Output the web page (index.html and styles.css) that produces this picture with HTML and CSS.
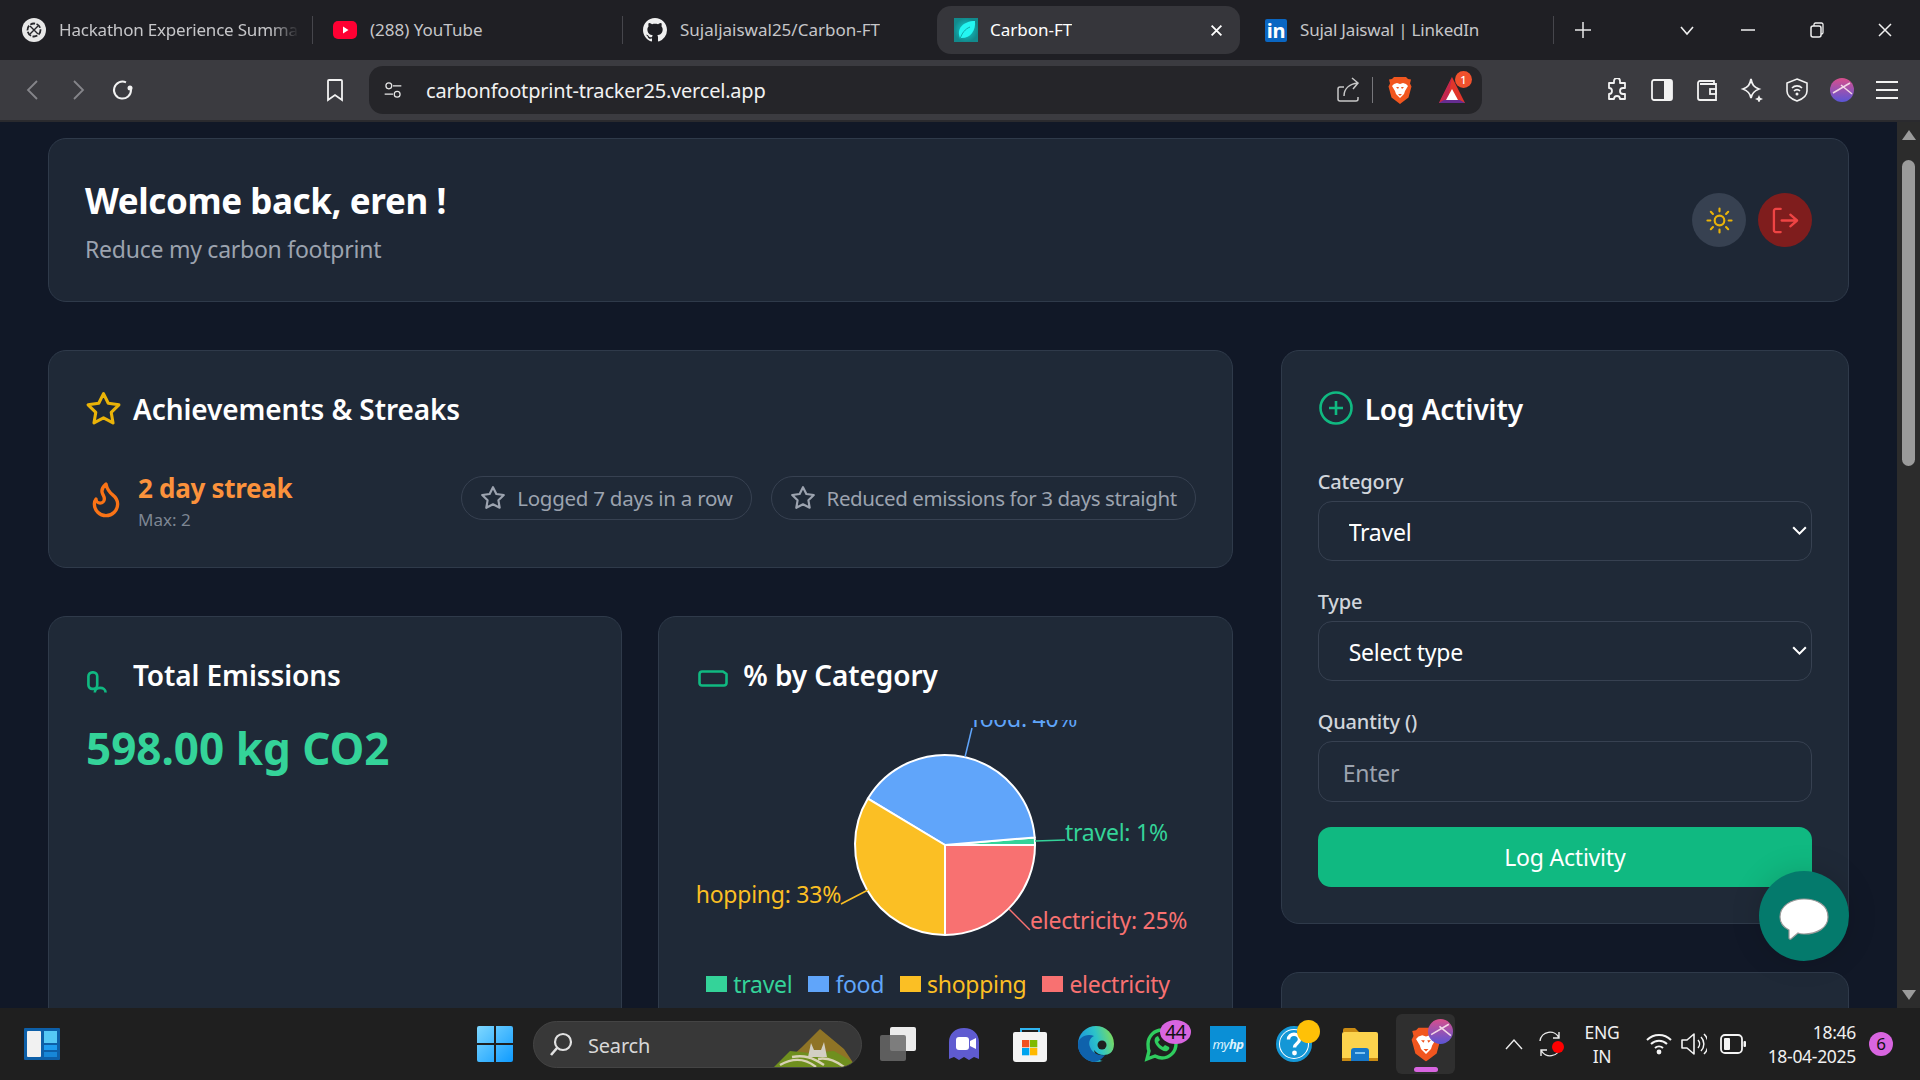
FILE: index.html
```html
<!DOCTYPE html>
<html lang="en">
<head>
  <meta charset="UTF-8">
  <title>Carbon-FT</title>
  <link rel="stylesheet" href="styles.css">
</head>
<body>
  <svg class="defs" width="0" height="0">
    <defs>
      <symbol id="lion" viewBox="0 0 24 28">
        <path fill="#f1561f" d="M6 1h12l2 2 3 .5-1 4 1.500 3-3 11L12 28l-8.500-6.500-3-11L2 7.500l-1-4L4 3z"/>
        <path fill="#fff" d="M6 8l3-1 3 1 3-1 3 1 2 2-3 5-1 3-4 4-4-4-1-3-3-5z"/>
        <path fill="#f1561f" d="M8 11h3l-1 2zM13 11h3l-2 2zM10 18h4l-2 2z"/>
      </symbol>
      <symbol id="profile" viewBox="0 0 24 24">
        <defs>
          <linearGradient id="pg" x1="0" y1="0" x2="0" y2="1"><stop offset="0" stop-color="#d94f8c"/><stop offset="1" stop-color="#5a55d6"/></linearGradient>
        </defs>
        <circle cx="12" cy="12" r="12" fill="url(#pg)"/>
        <path d="M3 15L20 5M11 7l11 9" stroke="#f3d6e6" stroke-width="1.500" fill="none"/>
      </symbol>
      <symbol id="star" viewBox="0 0 24 24">
        <polygon fill="none" stroke="currentColor" stroke-width="2" stroke-linejoin="round" points="12 2 15.090 8.260 22 9.270 17 14.140 18.180 21.020 12 17.770 5.820 21.020 7 14.140 2 9.270 8.910 8.260 12 2"/>
      </symbol>
      <symbol id="chev" viewBox="0 0 12 12">
        <path d="M2 4l4 4 4-4" fill="none" stroke="#fff" stroke-width="1.300"/>
      </symbol>
    </defs>
  </svg>

  <div class="tabstrip">
    <div class="tab tab-one">
      <svg class="fav" viewBox="0 0 24 24"><circle cx="12" cy="12" r="12" fill="#e8e8e8"/><circle cx="12" cy="12" r="6.500" fill="none" stroke="#26262b" stroke-width="1.800" stroke-dasharray="5 1.500"/><path d="M8 8l8 8M16 8l-8 8" stroke="#26262b" stroke-width="1.400"/></svg>
      <span class="tab-title fade">Hackathon Experience Summary</span>
    </div>
    <div class="tab tab-two">
      <svg class="fav" viewBox="0 0 24 24"><rect y="3" width="24" height="18" rx="5" fill="#ff0033"/><path d="M10 8.500l5.500 3.500-5.500 3.500z" fill="#fff"/></svg>
      <span class="tab-title">(288) YouTube</span>
    </div>
    <div class="tab tab-three">
      <svg class="fav" viewBox="0 0 16 16"><path fill="#f0f0f0" d="M8 0C3.580 0 0 3.580 0 8c0 3.540 2.290 6.530 5.470 7.590.4.070.55-.17.55-.38 0-.19-.01-.82-.01-1.490-2.010.37-2.530-.49-2.690-.94-.09-.23-.48-.94-.82-1.130-.28-.15-.68-.52-.01-.53.63-.01 1.080.58 1.230.82.72 1.210 1.870.87 2.330.66.07-.52.28-.87.51-1.070-1.780-.2-3.640-.89-3.640-3.950 0-.87.31-1.590.82-2.150-.08-.2-.36-1.020.08-2.120 0 0 .67-.21 2.200.82.64-.18 1.320-.27 2-.27.68 0 1.360.09 2 .27 1.530-1.040 2.200-.82 2.200-.82.44 1.100.16 1.920.08 2.120.51.56.82 1.270.82 2.150 0 3.070-1.870 3.750-3.650 3.950.29.25.54.73.54 1.480 0 1.070-.01 1.930-.01 2.200 0 .21.15.46.55.38A8.013 8.013 0 0016 8c0-4.420-3.580-8-8-8z"/></svg>
      <span class="tab-title">Sujaljaiswal25/Carbon-FT</span>
    </div>
    <div class="tab tab-active">
      <svg class="fav" viewBox="0 0 24 24">
        <defs><radialGradient id="cg"><stop offset="0" stop-color="#12d0d0"/><stop offset="1" stop-color="#128a8c"/></radialGradient></defs>
        <rect width="24" height="24" fill="url(#cg)"/><path d="M6 20C2 11 9 3 21 3c1 10-5 18-15 17z" fill="#24f6f2"/><path d="M6 21C8 15 11 11 16 9" fill="none" stroke="#12a8a8" stroke-width="1"/>
      </svg>
      <span class="tab-title">Carbon-FT</span>
      <svg class="tab-close" viewBox="0 0 12 12"><path d="M1.500 1.500l9 9M10.500 1.500l-9 9" stroke="#fff" stroke-width="1.700"/></svg>
    </div>
    <div class="tab tab-five">
      <span class="fav-in">in</span>
      <span class="tab-title">Sujal Jaiswal | LinkedIn</span>
    </div>
    <svg class="strip-ic plus" viewBox="0 0 18 18"><path d="M9 1v16M1 9h16" stroke="#e8e8e8" stroke-width="1.500"/></svg>
    <svg class="strip-ic tabs-down" viewBox="0 0 16 16"><path d="M2 5l6 7 6-7" stroke="#f0f0f0" stroke-width="1.600" fill="none"/></svg>
    <svg class="strip-ic win-min" viewBox="0 0 16 16"><path d="M1 8h14" stroke="#f0f0f0" stroke-width="1.500"/></svg>
    <svg class="strip-ic win-max" viewBox="0 0 16 16"><path d="M5 4V2.500A1.500 1.500 0 016.500 1h6A1.500 1.500 0 0114 2.500v8a1.500 1.500 0 01-1.500 1.500H12" fill="none" stroke="#f0f0f0" stroke-width="1.300"/><rect x="2" y="4" width="10" height="11" rx="2" fill="none" stroke="#f0f0f0" stroke-width="1.500"/></svg>
    <svg class="strip-ic win-close" viewBox="0 0 16 16"><path d="M2 2l12 12M14 2L2 14" stroke="#f0f0f0" stroke-width="1.500"/></svg>
  </div>

  <div class="toolbar">
    <div class="nav">
      <svg class="tool" viewBox="0 0 24 24"><path d="M16 3L7 12l9 9" fill="none" stroke="#85858a" stroke-width="1.800"/></svg>
      <svg class="tool" viewBox="0 0 24 24"><path d="M8 3l9 9-9 9" fill="none" stroke="#85858a" stroke-width="1.800"/></svg>
      <svg class="tool" viewBox="0 0 24 24"><path d="M20 12a8.500 8.500 0 11-5-7.700" fill="none" stroke="#f2f2f2" stroke-width="2"/><circle cx="19" cy="10" r="2.500" fill="#f2f2f2"/></svg>
    </div>
    <svg class="tool bookmark" viewBox="0 0 24 24"><path d="M6 2h12a1 1 0 011 1v19l-7-5-7 5V3a1 1 0 011-1z" fill="none" stroke="#f2f2f2" stroke-width="1.800"/></svg>
    <div class="address">
      <svg class="site" viewBox="0 0 24 24"><circle cx="7" cy="7" r="3.500" fill="none" stroke="#e8e8e8" stroke-width="1.500"/><path d="M12 7h10M2 17h10" stroke="#e8e8e8" stroke-width="1.500"/><circle cx="17" cy="17" r="3.500" fill="none" stroke="#e8e8e8" stroke-width="1.500"/></svg>
      <span class="url">carbonfootprint-tracker25.vercel.app</span>
      <svg class="share" viewBox="0 0 24 26"><path d="M8 10H4a2 2 0 00-2 2v10a2 2 0 002 2h16a2 2 0 002-2v-2" fill="none" stroke="#c8c8c8" stroke-width="1.500"/><path d="M8 19C8 12 13 7 22 6M16 1l6 5-5 6" fill="none" stroke="#c8c8c8" stroke-width="1.500"/></svg>
      <i class="addr-div"></i>
      <svg class="brave" viewBox="0 0 24 28"><use href="#lion"/></svg>
      <div class="rewards">
        <svg viewBox="0 0 28 30"><path d="M14 2L27 28H1z" fill="#e0352b"/><path d="M1 28L14 2l-5 26z" fill="#c2274e"/><path d="M14 14l6 11H8z" fill="#fff"/><path d="M1 28h26l-5-3H6z" fill="#662d91"/></svg>
        <b class="rewards-badge">1</b>
      </div>
    </div>
    <div class="tools-right">
      <svg class="tool" viewBox="0 0 24 24"><path d="M9 3a3 3 0 016 0v2h5v5h-2a3 3 0 000 6h2v5h-5a3 3 0 00-6 0H4v-5a3 3 0 000-6V5h5z" fill="none" stroke="#f2f2f2" stroke-width="1.800" stroke-linejoin="round"/></svg>
      <svg class="tool" viewBox="0 0 24 24"><rect x="2" y="2" width="20" height="20" rx="2" fill="none" stroke="#f2f2f2" stroke-width="1.800"/><rect x="14" y="2" width="8" height="20" fill="#f2f2f2"/></svg>
      <svg class="tool" viewBox="0 0 24 24"><path d="M19 6V3H5a2 2 0 00-2 2v15a2 2 0 002 2h16V6H5" fill="none" stroke="#f2f2f2" stroke-width="1.800"/><rect x="15" y="11" width="6" height="5" fill="none" stroke="#f2f2f2" stroke-width="1.800"/></svg>
      <svg class="tool" viewBox="0 0 24 24"><path d="M11 1c1 6 3 8 8 10-5 2-7 4-8 9-1-5-3-7-8-9 5-2 7-4 8-10z" fill="none" stroke="#f2f2f2" stroke-width="1.800"/><path d="M19 17l1.200 2.800L23 21l-2.800 1.200L19 25l-1.200-2.800L15 21l2.800-1.200z" fill="#f2f2f2"/></svg>
      <svg class="tool" viewBox="0 0 24 24"><path d="M12 1l10 4v8c0 5-4 8-10 10C6 21 2 18 2 13V5z" fill="none" stroke="#f2f2f2" stroke-width="1.600"/><path d="M7 10a7 7 0 0110 0M9 13a4 4 0 016 0" fill="none" stroke="#f2f2f2" stroke-width="1.600"/><circle cx="12" cy="16" r="1.500" fill="#f2f2f2"/></svg>
      <svg class="tool" viewBox="0 0 24 24"><use href="#profile"/></svg>
      <svg class="tool" viewBox="0 0 24 24"><path d="M1 4h22M1 12h22M1 20h22" stroke="#f2f2f2" stroke-width="2"/></svg>
    </div>
  </div>

  <div class="page">
    <main class="content">
      <header class="card welcome">
        <div class="welcome-text">
          <h1>Welcome back, eren !</h1>
          <p class="subtitle">Reduce my carbon footprint</p>
        </div>
        <div class="head-btns">
          <button class="round-btn btn-sun">
            <svg viewBox="0 0 28 28" fill="none" stroke="#eab308" stroke-width="2.200" stroke-linecap="round"><circle cx="14" cy="14" r="5"/><path d="M14 1.500v3M14 23.500v3M1.500 14h3M23.500 14h3M5 5l2.200 2.200M20.800 20.800L23 23M5 23l2.200-2.200M20.800 7.200L23 5"/></svg>
          </button>
          <button class="round-btn btn-out">
            <svg viewBox="0 0 28 28" fill="none" stroke="#ef4444" stroke-width="2.400" stroke-linecap="round" stroke-linejoin="round"><path d="M9 26H4a2 2 0 01-2-2V4a2 2 0 012-2h5"/><path d="M19 20l7-6-7-6M26 14H10"/></svg>
          </button>
        </div>
      </header>

      <div class="grid">
        <div class="left-col">
          <section class="card achievements">
            <div class="card-title">
              <span class="title-ic"><svg class="ic-star" viewBox="0 0 24 24"><use href="#star"/></svg></span>
              <h2>Achievements &amp; Streaks</h2>
            </div>
            <div class="streak-row">
              <svg class="flame" viewBox="0 0 24 24"><path d="M8.500 14.500A2.500 2.500 0 0011 12c0-1.380-.5-2-1-3-1.072-2.143-.224-4.054 2-6 .5 2.500 2 4.900 4 6.500 2 1.600 3 3.500 3 5.500a7 7 0 11-14 0c0-1.153.433-2.294 1-3a2.500 2.500 0 002.500 2.500z" fill="none" stroke="#f97316" stroke-width="2" stroke-linejoin="round"/></svg>
              <div class="streak">
                <div class="streak-num">2 day streak</div>
                <div class="streak-max">Max: 2</div>
              </div>
              <div class="chips">
                <span class="chip"><svg viewBox="0 0 24 24"><use href="#star"/></svg>Logged 7 days in a row</span>
                <span class="chip chip-long"><svg viewBox="0 0 24 24"><use href="#star"/></svg>Reduced emissions for 3 days straight</span>
              </div>
            </div>
          </section>

          <div class="stats">
            <section class="card stat stat-total">
              <div class="card-title">
                <span class="title-ic"><svg class="ic-total" viewBox="0 0 18 20" fill="none" stroke="#10b981" stroke-width="2.400"><rect x="1.200" y="1.200" width="8" height="15" rx="3.500"/><path d="M7 19.500c0-5.500 9.800-5.500 9.800 0"/></svg></span>
                <h2>Total Emissions</h2>
              </div>
              <div class="total">598.00 kg CO2</div>
            </section>

            <section class="card stat stat-cat">
              <div class="card-title">
                <span class="title-ic"><svg class="ic-cat" viewBox="0 0 30 17" fill="none" stroke="#10b981" stroke-width="2.600"><path d="M4 1.500h21l3.500 2.500v9a2.500 2.500 0 01-2.500 2.500H4A2.500 2.500 0 011.500 13V4A2.500 2.500 0 014 1.500z" stroke-linejoin="round"/></svg></span>
                <h2>% by Category</h2>
              </div>
              <svg class="pie" viewBox="0 0 500 248" width="500" height="248">
                <g stroke="#fff" stroke-width="2" stroke-linejoin="round">
                  <path fill="#34d399" d="M250 125L340 125A90 90 0 0 0 339.700 117.400Z"/>
                  <path fill="#60a5fa" d="M250 125L339.700 117.400A90 90 0 0 0 172.900 78.600Z"/>
                  <path fill="#fbbf24" d="M250 125L172.900 78.600A90 90 0 0 0 250 215Z"/>
                  <path fill="#f87171" d="M250 125L250 215A90 90 0 0 0 340 125Z"/>
                </g>
                <g fill="none" stroke-width="1.500">
                  <path stroke="#60a5fa" d="M270 37L277 8"/>
                  <path stroke="#34d399" d="M340 121L370 120"/>
                  <path stroke="#fbbf24" d="M173 170L146 184"/>
                  <path stroke="#f87171" d="M314 189L335 210"/>
                </g>
                <g class="pie-label">
                  <text x="277" y="7" fill="#60a5fa">food: 40%</text>
                  <text x="370" y="121" fill="#34d399">travel: 1%</text>
                  <text x="146" y="183" fill="#fbbf24" text-anchor="end">hopping: 33%</text>
                  <text x="335" y="209" fill="#f87171">electricity: 25%</text>
                </g>
              </svg>
              <div class="legend">
                <span class="leg leg-travel"><i></i>travel</span>
                <span class="leg leg-food"><i></i>food</span>
                <span class="leg leg-shop"><i></i>shopping</span>
                <span class="leg leg-elec"><i></i>electricity</span>
              </div>
            </section>
          </div>
        </div>

        <aside class="right-col">
          <section class="card log">
            <div class="card-title">
              <span class="title-ic"><svg class="ic-plus" viewBox="0 0 34 34" fill="none" stroke="#10b981" stroke-width="2.600"><circle cx="17" cy="17" r="15.500"/><path d="M17 10v14M10 17h14"/></svg></span>
              <h2>Log Activity</h2>
            </div>
            <form class="log-form">
              <label>Category</label>
              <div class="select-wrap">
                <select><option>Travel</option></select>
                <svg viewBox="0 0 12 12"><use href="#chev"/></svg>
              </div>
              <label>Type</label>
              <div class="select-wrap">
                <select><option>Select type</option></select>
                <svg viewBox="0 0 12 12"><use href="#chev"/></svg>
              </div>
              <label>Quantity ()</label>
              <input type="text" placeholder="Enter">
              <button type="button" class="submit">Log Activity</button>
            </form>
          </section>
          <section class="card next-card"></section>
        </aside>
      </div>
      <button class="chat-btn">
        <svg viewBox="0 0 50 42"><path d="M25 1c13 0 24 6 24 18 0 11-11 17-24 17-2 0-4 0-6-1l-7 6c-1 .5-2 0-2-1v-8C4 29 1 25 1 19 1 8 12 1 25 1z" fill="#fff" stroke="#999" stroke-width="1.200"/></svg>
      </button>
    </main>
    <div class="scrollbar">
      <svg viewBox="0 0 14 10"><path d="M7 0l7 10H0z" fill="#9b9b9b"/></svg>
      <div class="thumb"></div>
      <svg class="arrow-down" viewBox="0 0 14 10"><path d="M0 0h14L7 10z" fill="#9b9b9b"/></svg>
    </div>
  </div>

  <footer class="taskbar">
    <svg class="widgets" viewBox="0 0 36 32"><rect width="36" height="32" rx="1" fill="#0d5fa8"/><rect x="3" y="3" width="14" height="26" rx="1" fill="#f1f1f1"/><rect x="20" y="3" width="13" height="12" fill="#55c8f5"/><rect x="20" y="17" width="13" height="5" fill="#1e9cf0"/><rect x="20" y="24" width="13" height="5" fill="#1787d8"/></svg>
    <svg class="start" viewBox="0 0 36 36">
      <defs><linearGradient id="wg" x1="0" y1="0" x2="1" y2="1"><stop offset="0" stop-color="#7fd8ff"/><stop offset="1" stop-color="#0f9bff"/></linearGradient></defs>
      <path fill="url(#wg)" d="M0 2a2 2 0 012-2h15v17H0zM19 0h15a2 2 0 012 2v15H19zM0 19h17v17H2a2 2 0 01-2-2zM19 19h17v15a2 2 0 01-2 2H19z"/>
    </svg>
    <div class="search">
      <svg class="search-ic" viewBox="0 0 24 24"><circle cx="14" cy="10" r="8" fill="none" stroke="#e2e2e2" stroke-width="2.200"/><path d="M8 16l-6 7" stroke="#e2e2e2" stroke-width="2.600"/></svg>
      <span class="search-text">Search</span>
      <svg class="search-art" viewBox="0 0 84 38"><path d="M6 38L28 18 46 0l12 10 12 10 12 18z" fill="#8f7426"/><path d="M0 38l16-16 20 2 24-2 14 8 10 8z" fill="#6f8f1e"/><path d="M6 36c14-8 26-6 36 2M18 28c12-2 20 0 32 8M44 30c10-2 18 2 26 8" fill="none" stroke="#d8d2b4" stroke-width="2.400"/><path d="M34 28l3-14 3 7 7 0 3-8 3 15z" fill="#d2cfc4"/></svg>
    </div>
    <div class="apps">
      <svg class="app" viewBox="0 0 36 36"><rect x="10" y="1" width="26" height="24" rx="2" fill="#ececec"/><rect y="9" width="26" height="26" rx="2" fill="#6a6a6a" opacity=".85"/></svg>
      <svg class="app" viewBox="0 0 36 36"><path d="M18 2c9 0 15 6 15 14v17l-5-2-5 3-5-3-5 3-5-3-5 2V16C3 8 9 2 18 2z" fill="#5f5bd0"/><rect x="10" y="11" width="13" height="13" rx="3" fill="#fff"/><path d="M24 15l6-3v11l-6-3z" fill="#fff"/></svg>
      <svg class="app" viewBox="0 0 36 36"><path d="M9 9V3h18v6" fill="none" stroke="#2fb4f0" stroke-width="2"/><path d="M1 8a2 2 0 012-2h30a2 2 0 012 2v25a3 3 0 01-3 3H4a3 3 0 01-3-3z" fill="#f4f4f4"/><rect x="10" y="14" width="7.300" height="7.300" fill="#f25022"/><rect x="18" y="14" width="7.300" height="7.300" fill="#7fba00"/><rect x="10" y="22" width="7.300" height="7.300" fill="#00a4ef"/><rect x="18" y="22" width="7.300" height="7.300" fill="#ffb900"/></svg>
      <svg class="app" viewBox="0 0 36 36">
        <defs><linearGradient id="eg" x1="0" y1="0.600" x2="1" y2="0.300"><stop offset="0" stop-color="#1a8ee0"/><stop offset=".55" stop-color="#2cc3c9"/><stop offset="1" stop-color="#7ddc5c"/></linearGradient></defs>
        <circle cx="18" cy="18" r="18" fill="url(#eg)"/>
        <path d="M36 21c-1 5-5 8-10 8-4 0-8-2-10-5 1 6 6 12 10 11 6-2 10-8 10-14z" fill="#1f1f1f"/>
        <path d="M0 19C0 11 9 7 16 10c-4 2-6 6-4 11 2 6 9 9 15 8-3 4-7 7-11 7C7 35 0 28 0 19z" fill="#0f62ac"/>
        <circle cx="24" cy="19" r="4.500" fill="#1f1f1f"/>
      </svg>
      <div class="app-wrap">
        <svg class="app" viewBox="0 0 36 36"><path d="M4 18a14 14 0 1114 14c-3 0-5-1-7-2l-8 3 2-8c-1-2-1-4-1-7z" fill="none" stroke="#2fcc5e" stroke-width="3.400"/><path d="M12 11c-2 2-2 5 1 9s8 6 10 5 3-3 2-4l-4-2-2 2c-2-1-4-3-5-5l2-2-2-4z" fill="#2fcc5e"/></svg>
        <b class="task-badge">44</b>
      </div>
      <div class="myhp">my<b>hp</b></div>
      <div class="app-wrap">
        <svg class="app" viewBox="0 0 36 36"><circle cx="18" cy="18" r="16.500" fill="#fff" stroke="#1497d6" stroke-width="3"/><circle cx="18" cy="18" r="14" fill="#1497d6"/><path d="M12.500 13.500c0-7 11-7 11 0 0 4-5 4-5 8" fill="none" stroke="#fff" stroke-width="3.400"/><circle cx="18.500" cy="27" r="2.400" fill="#fff"/></svg>
        <i class="help-dot"></i>
      </div>
      <svg class="app" viewBox="0 0 36 36"><path d="M1 4a2 2 0 012-2h10l4 4H1z" fill="#c98a12"/><rect x="0" y="6" width="36" height="29" rx="2" fill="#fcd34d"/><rect x="0" y="32" width="36" height="3" fill="#c98a12"/><path d="M9 25a3 3 0 013-3h12a3 3 0 013 3v10H9z" fill="#1677c8"/><rect x="13" y="26" width="10" height="2" fill="#7fc4f2"/></svg>
      <div class="app-active">
        <svg class="brave-task" viewBox="0 0 24 28"><use href="#lion"/></svg>
        <svg class="brave-profile" viewBox="0 0 24 24"><use href="#profile"/></svg>
        <i class="active-bar"></i>
      </div>
    </div>
    <div class="tray">
      <svg class="tray-up" viewBox="0 0 18 12"><path d="M1 11l8-9 8 9" fill="none" stroke="#ededed" stroke-width="1.400"/></svg>
      <div class="sync">
        <svg viewBox="0 0 26 30"><path d="M3 12A10 10 0 0122 9M22 3v6h-6M23 18A10 10 0 014 21M4 27v-6h6" fill="none" stroke="#ededed" stroke-width="1.400"/></svg>
        <i class="sync-dot"></i>
      </div>
      <div class="lang"><span>ENG</span><span>IN</span></div>
      <svg class="tray-ic wifi" viewBox="0 0 26 24"><path d="M1 8a17 17 0 0124 0M5 12a11.500 11.500 0 0116 0M9 16a6 6 0 018 0" fill="none" stroke="#f4f4f4" stroke-width="2"/><circle cx="13" cy="20" r="2.400" fill="#f4f4f4"/></svg>
      <svg class="tray-ic speaker" viewBox="0 0 26 24"><path d="M1 8h5l7-6v20l-7-6H1z" fill="none" stroke="#f4f4f4" stroke-width="1.600" stroke-linejoin="round"/><path d="M17 8a6 6 0 010 8M20 5a10 10 0 010 14M23 2a14 14 0 010 20" fill="none" stroke="#f4f4f4" stroke-width="1.500"/></svg>
      <svg class="tray-ic battery" viewBox="0 0 26 20"><rect x="1" y="1" width="21" height="18" rx="4" fill="none" stroke="#f4f4f4" stroke-width="1.800"/><rect x="4" y="4" width="6" height="12" rx="1" fill="#f4f4f4"/><rect x="23.500" y="7" width="2.500" height="6" rx="1" fill="#f4f4f4"/></svg>
      <div class="clock"><span>18:46</span><span>18-04-2025</span></div>
      <b class="notif">6</b>
    </div>
  </footer>
</body>
</html>
```

FILE: styles.css
```css
* {
  box-sizing: border-box;
}

html, body {
  height: 100%;
}

body {
  margin: 0;
  height: 1080px;
  overflow: hidden;
  display: flex;
  flex-direction: column;
  font-family: "Noto Sans", "Open Sans", sans-serif;
  background: #111827;
  color: #fff;
}

.defs {
  position: absolute;
}

/* tab strip */
.tabstrip {
  height: 60px;
  flex: none;
  display: flex;
  align-items: center;
  background: #1f1f24;
  padding-left: 22px;
}

.tab {
  height: 48px;
  display: flex;
  align-items: center;
  flex: none;
  font-size: 17px;
  color: #c6c6c9;
}

.tab-title {
  white-space: nowrap;
  overflow: hidden;
  margin-top: -2px;
}

.fav {
  width: 24px;
  height: 24px;
  flex: none;
  margin-right: 13px;
}

.fav-in {
  width: 22px;
  height: 23px;
  margin-right: 13px;
  flex: none;
  background: #0a66c2;
  border-radius: 2px;
  color: #fff;
  font-weight: 700;
  font-size: 20px;
  line-height: 24px;
  text-align: center;
}

.tab-one {
  width: 291px;
  position: relative;
  letter-spacing: -0.2px;
}

.tab-one .fade {
  width: 240px;
  -webkit-mask-image: linear-gradient(to right, #000 88%, transparent);
  mask-image: linear-gradient(to right, #000 88%, transparent);
}

.tab-one::after, .tab-two::after, .tab-five::after {
  content: "";
  position: absolute;
  right: 0;
  top: 10px;
  height: 28px;
  width: 1px;
  background: #46464c;
}

.tab-two {
  width: 310px;
  padding-left: 20px;
  position: relative;
}

.tab-three {
  width: 314px;
  padding-left: 20px;
}

.tab-active {
  width: 303px;
  padding: 0 17px;
  background: #36363b;
  border-radius: 14px;
  color: #fff;
}

.tab-active .fav {
  margin-right: 12px;
}

.tab-close {
  width: 13px;
  height: 13px;
  margin-left: auto;
}

.tab-five {
  width: 314px;
  padding-left: 25px;
  position: relative;
  letter-spacing: -0.2px;
}

.strip-ic {
  flex: none;
}

.plus {
  width: 18px;
  height: 18px;
  margin-left: 20px;
}

.tabs-down {
  width: 16px;
  height: 16px;
  margin-left: 87px;
}

.win-min {
  width: 16px;
  height: 16px;
  margin-left: 45px;
}

.win-max {
  width: 16px;
  height: 16px;
  margin-left: 53px;
}

.win-close {
  width: 16px;
  height: 16px;
  margin-left: 52px;
}

/* toolbar */
.toolbar {
  height: 62px;
  flex: none;
  display: flex;
  align-items: center;
  background: #3b3b40;
  border-bottom: 2px solid #2a2a2e;
  padding-left: 21px;
}

.tool {
  width: 24px;
  height: 24px;
  flex: none;
}

.nav {
  display: flex;
  gap: 21px;
}

.bookmark {
  margin-left: 188px;
}

.address {
  width: 1113px;
  height: 48px;
  margin-left: 22px;
  background: #252529;
  border-radius: 14px;
  display: flex;
  align-items: center;
  padding-left: 14px;
}

.site {
  width: 20px;
  height: 20px;
}

.url {
  margin-left: 23px;
  font-size: 20px;
  letter-spacing: -0.2px;
  color: #f1f1f1;
}

.share {
  width: 24px;
  height: 26px;
  margin-left: auto;
}

.addr-div {
  width: 1px;
  height: 26px;
  background: #77777b;
  margin-left: 12px;
}

.brave {
  width: 24px;
  height: 28px;
  margin-left: 15px;
}

.rewards {
  position: relative;
  width: 28px;
  height: 30px;
  margin-left: 26px;
  margin-right: 16px;
}

.rewards svg {
  width: 28px;
  height: 30px;
  display: block;
}

.rewards-badge {
  position: absolute;
  right: -6px;
  top: -4px;
  width: 17px;
  height: 17px;
  border-radius: 50%;
  background: #f0512d;
  font-size: 11px;
  font-weight: 500;
  line-height: 17px;
  text-align: center;
}

.tools-right {
  display: flex;
  gap: 21px;
  margin-left: 123px;
}

/* page */
.page {
  flex: 1;
  min-height: 0;
  display: flex;
  background: #111827;
}

.content {
  flex: 1;
  min-width: 0;
  padding: 16px 48px 0;
  overflow: hidden;
  position: relative;
}

.scrollbar {
  width: 23px;
  flex: none;
  background: #2c2c2c;
  display: flex;
  flex-direction: column;
  align-items: center;
  padding: 8px 0 8px 0;
}

.scrollbar svg {
  width: 14px;
  height: 10px;
  flex: none;
}

.thumb {
  width: 13px;
  height: 306px;
  margin-top: 20px;
  border-radius: 7px;
  background: #9b9b9b;
}

.arrow-down {
  margin-top: auto;
}

.card {
  background: #1f2937;
  border: 1px solid #2f3a4a;
  border-radius: 18px;
}

.welcome {
  height: 164px;
  display: flex;
  align-items: center;
  justify-content: space-between;
  padding: 0 36px;
  background: #1e2735;
}

.welcome-text {
  padding-top: 2px;
}

h1 {
  margin: 0;
  font-size: 35px;
  line-height: 46px;
  font-weight: 700;
  letter-spacing: -0.4px;
}

.subtitle {
  margin: 9px 0 0;
  font-size: 23px;
  line-height: 32px;
  color: #9ca3af;
  letter-spacing: -0.25px;
}

.head-btns {
  display: flex;
  gap: 12px;
}

.round-btn {
  width: 54px;
  height: 54px;
  border: none;
  border-radius: 50%;
  padding: 0;
  display: flex;
  align-items: center;
  justify-content: center;
}

.round-btn svg {
  width: 27px;
  height: 27px;
}

.btn-sun {
  background: #374151;
}

.btn-out {
  background: #7f1d1d;
}

.grid {
  margin-top: 48px;
  display: grid;
  grid-template-columns: repeat(3, minmax(0, 1fr));
  gap: 48px;
}

.left-col {
  grid-column: span 2;
  display: flex;
  flex-direction: column;
  gap: 48px;
}

.right-col {
  display: flex;
  flex-direction: column;
  gap: 48px;
}

.card-title {
  display: flex;
  align-items: center;
  height: 44px;
  gap: 11px;
}

.card-title h2 {
  margin: 0;
  font-size: 28px;
  font-weight: 600;
  letter-spacing: -0.1px;
  white-space: nowrap;
}

.title-ic {
  width: 36px;
  display: flex;
  align-items: center;
  flex: none;
}

.ic-star {
  width: 38px;
  height: 38px;
  margin-left: -1px;
  color: #eab308;
}

.ic-total {
  width: 20px;
  height: 22px;
  margin: 14px 0 0 1px;
}

.ic-cat {
  width: 30px;
  height: 17px;
  margin: 6px 0 0 3px;
}

.ic-plus {
  width: 34px;
  height: 34px;
  margin: -2px 0 0 1px;
}

.achievements {
  padding: 36px 36px 33px 37px;
}

.streak-row {
  margin-top: 39px;
  display: flex;
  align-items: flex-start;
}

.flame {
  width: 40px;
  height: 40px;
  margin: 9px 0 0 0;
  flex: none;
}

.streak {
  margin-left: 12px;
}

.streak-num {
  font-size: 26px;
  line-height: 36px;
  font-weight: 700;
  color: #fb923c;
  letter-spacing: -0.3px;
}

.streak-max {
  font-size: 17px;
  line-height: 28px;
  color: #7d8693;
}

.chips {
  margin-left: auto;
  margin-top: 6px;
  display: flex;
  gap: 19px;
}

.chip {
  height: 44px;
  padding: 0 18px 0 18px;
  display: flex;
  align-items: center;
  gap: 11px;
  border: 1px solid #374151;
  border-radius: 22px;
  font-size: 20.500px;
  letter-spacing: -0.25px;
  color: #9ca3af;
  white-space: nowrap;
}

.chip-long {
  letter-spacing: -0.4px;
}

.chip svg {
  width: 26px;
  height: 26px;
}

.stats {
  display: grid;
  grid-template-columns: repeat(2, minmax(0, 1fr));
  gap: 36px;
}

.stat {
  height: 500px;
  padding: 36px;
}

.stat-total {
  padding-left: 37px;
}

.stat-cat .card-title {
  gap: 12px;
}

.total {
  margin-top: 21px;
  font-size: 44px;
  line-height: 60px;
  font-weight: 700;
  color: #34d399;
}

.pie {
  display: block;
  margin-top: 23px;
}

.pie-label {
  font-size: 23px;
  letter-spacing: -0.25px;
}

.legend {
  display: flex;
  margin: 0 0 0 11px;
  font-size: 23px;
  line-height: 32px;
  letter-spacing: -0.3px;
}

.leg {
  display: flex;
  align-items: center;
  gap: 6px;
  margin-right: 16px;
}

.leg i {
  width: 21px;
  height: 16px;
}

.leg-travel { color: #34d399; }
.leg-food { color: #60a5fa; }
.leg-shop { color: #fbbf24; }
.leg-elec { color: #f87171; }
.leg-travel i { background: #34d399; }
.leg-food i { background: #60a5fa; }
.leg-shop i { background: #fbbf24; }
.leg-elec i { background: #f87171; }

.log {
  padding: 36px 36px 36px;
}

.log-form {
  display: flex;
  flex-direction: column;
  margin-top: 37px;
}

label {
  font-size: 20px;
  line-height: 28px;
  font-weight: 500;
  color: #d1d5db;
  letter-spacing: -0.15px;
  margin-bottom: 5px;
}

.select-wrap {
  position: relative;
  margin-bottom: 27px;
}

.select-wrap svg {
  position: absolute;
  right: 3px;
  top: 20px;
  width: 19px;
  height: 19px;
  pointer-events: none;
}

select, input {
  width: 100%;
  height: 60px;
  display: block;
  background: #1f2937;
  border: 1px solid #374151;
  border-radius: 14px;
  color: #fff;
  font-family: inherit;
  font-size: 23px;
  letter-spacing: -0.25px;
  appearance: none;
  -webkit-appearance: none;
}

select {
  padding: 2px 0 0 30px;
}

input {
  height: 61px;
  padding: 2px 0 0 24px;
}

input::placeholder {
  color: #9ca3af;
  opacity: 1;
}

.submit {
  height: 60px;
  margin-top: 25px;
  background: #10b981;
  border: none;
  border-radius: 13px;
  color: #fff;
  font-family: inherit;
  font-size: 23px;
  letter-spacing: -0.2px;
}

.next-card {
  height: 200px;
}

.chat-btn {
  position: absolute;
  right: 48px;
  top: 749px;
  width: 90px;
  height: 90px;
  border: none;
  border-radius: 50%;
  padding: 6px 0 0;
  background: #047a6c;
  display: flex;
  align-items: center;
  justify-content: center;
  box-shadow: 0 0 30px rgba(0,0,0,0.15);
}

.chat-btn svg {
  width: 50px;
  height: 42px;
}

/* taskbar */
.taskbar {
  height: 72px;
  flex: none;
  display: flex;
  align-items: center;
  background: #1f1f1f;
  padding-left: 24px;
  font-size: 18px;
}

.widgets {
  width: 36px;
  height: 32px;
  flex: none;
}

.start {
  width: 36px;
  height: 36px;
  flex: none;
  margin-left: 417px;
}

.search {
  width: 329px;
  height: 47px;
  margin-left: 20px;
  flex: none;
  background: #383838;
  border: 1px solid #444;
  border-radius: 24px;
  display: flex;
  align-items: center;
  padding-left: 15px;
  position: relative;
  overflow: hidden;
}

.search-ic {
  width: 24px;
  height: 24px;
}

.search-text {
  margin: 2px 0 0 15px;
  font-size: 20px;
  color: #d8d8d8;
  letter-spacing: -0.2px;
}

.search-art {
  margin-left: auto;
  margin-right: 3px;
  margin-top: 8px;
  width: 84px;
  height: 38px;
}

.apps {
  display: flex;
  align-items: center;
  gap: 30px;
  margin-left: 18px;
}

.app {
  width: 36px;
  height: 36px;
  flex: none;
  display: block;
}

.app-wrap {
  position: relative;
  width: 36px;
  height: 36px;
}

.task-badge {
  position: absolute;
  left: 16px;
  top: -6px;
  width: 31px;
  height: 24px;
  border-radius: 50%;
  background: #d865e0;
  color: #111;
  font-size: 19px;
  font-weight: 400;
  letter-spacing: -0.6px;
  line-height: 24px;
  text-align: center;
}

.help-dot {
  position: absolute;
  left: 21px;
  top: -6px;
  width: 23px;
  height: 23px;
  border-radius: 50%;
  background: #ffc107;
}

.myhp {
  width: 36px;
  height: 36px;
  background: #0a8fd6;
  color: #dff3fd;
  font-size: 13px;
  font-style: italic;
  line-height: 36px;
  text-align: center;
  letter-spacing: -0.5px;
}

.myhp b {
  font-weight: 700;
}

.app-active {
  position: relative;
  width: 59px;
  height: 60px;
  margin-left: -12px;
  background: #2f2f2f;
  border-radius: 6px;
  display: flex;
  align-items: center;
  padding-left: 15px;
}

.brave-task {
  width: 30px;
  height: 36px;
}

.brave-profile {
  position: absolute;
  left: 32px;
  top: 5px;
  width: 25px;
  height: 25px;
}

.active-bar {
  position: absolute;
  left: 18px;
  bottom: 2px;
  width: 24px;
  height: 5px;
  border-radius: 3px;
  background: #d865e0;
}

.tray {
  display: flex;
  align-items: center;
  margin-left: 50px;
}

.tray-up {
  width: 18px;
  height: 12px;
}

.sync {
  position: relative;
  width: 26px;
  height: 30px;
  margin-left: 14px;
}

.sync svg {
  width: 26px;
  height: 30px;
  display: block;
}

.sync-dot {
  position: absolute;
  right: -1px;
  top: 12px;
  width: 12px;
  height: 12px;
  border-radius: 50%;
  background: #f00;
}

.lang, .clock {
  display: flex;
  flex-direction: column;
  font-size: 17.500px;
  line-height: 24px;
  color: #f0f0f0;
  letter-spacing: -0.3px;
}

.lang {
  margin-left: 21px;
  width: 36px;
  align-items: center;
}

.tray-ic {
  flex: none;
}

.wifi {
  width: 26px;
  height: 24px;
  margin-left: 26px;
}

.speaker {
  width: 26px;
  height: 24px;
  margin-left: 9px;
}

.battery {
  width: 26px;
  height: 20px;
  margin-left: 13px;
}

.clock {
  width: 120px;
  margin-left: -10px;
  align-items: flex-end;
}

.notif {
  width: 24px;
  height: 24px;
  margin-left: 13px;
  border-radius: 50%;
  background: #d865e0;
  color: #111;
  font-size: 17px;
  font-weight: 400;
  line-height: 24px;
  text-align: center;
}
```
